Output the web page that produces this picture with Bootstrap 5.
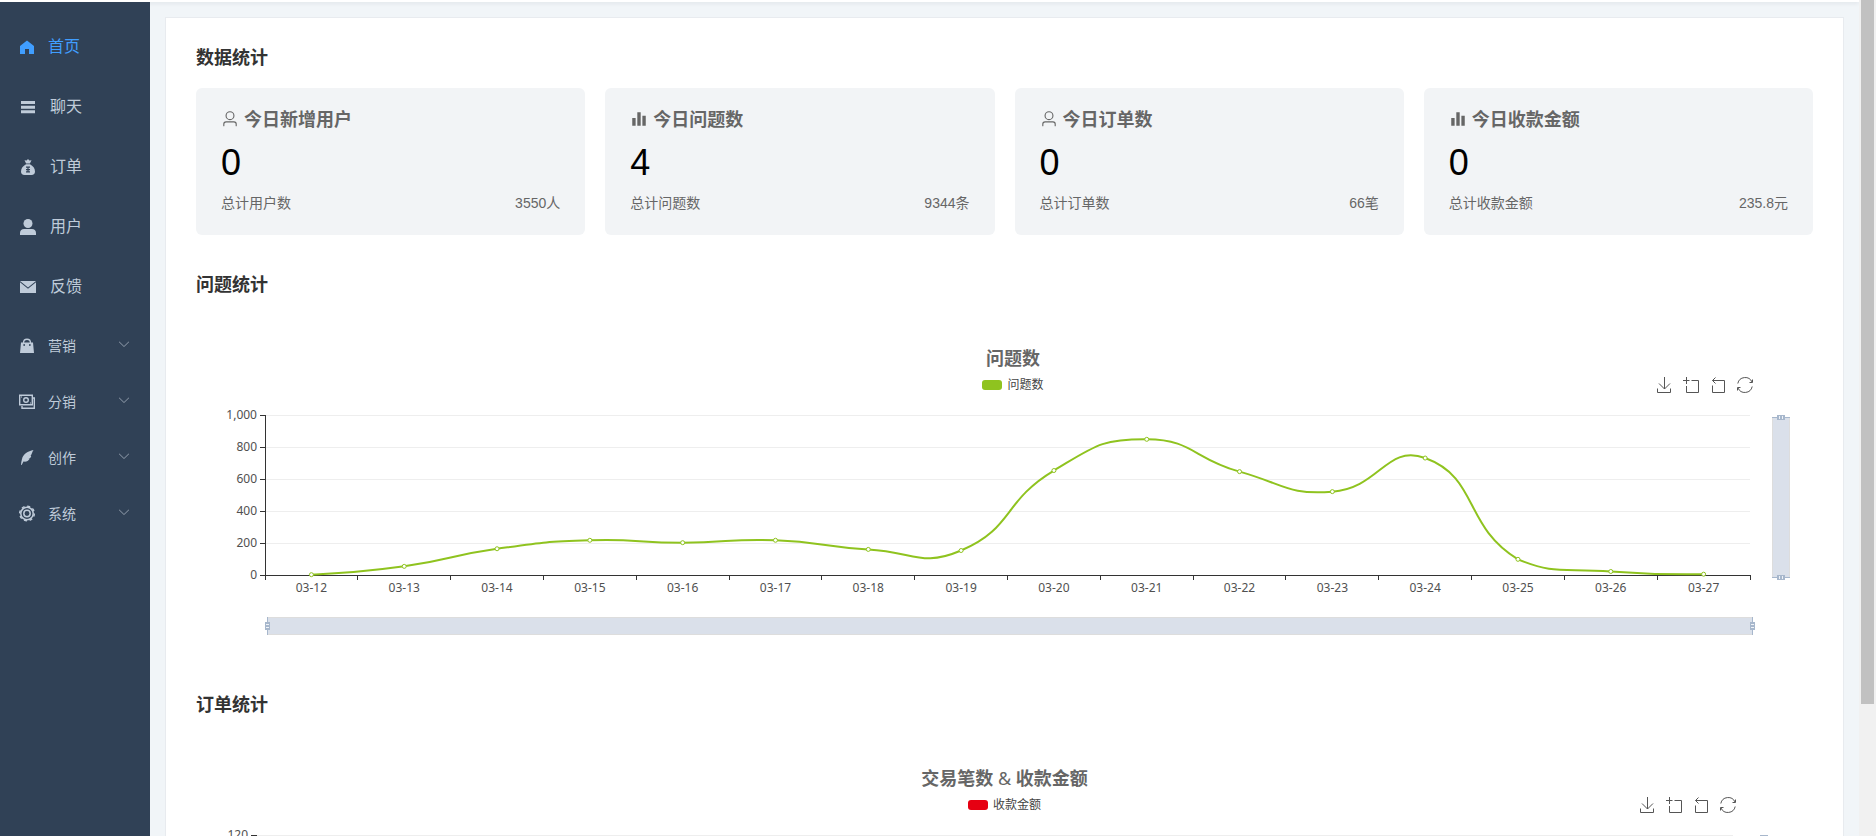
<!DOCTYPE html>
<html lang="zh-CN">
<head>
<meta charset="utf-8">
<meta name="viewport" content="width=device-width, initial-scale=1">
<title>首页</title>
<link href="https://cdn.jsdelivr.net/npm/bootstrap@5.3.0/dist/css/bootstrap.min.css" rel="stylesheet">
<style>
  body { font-family: "Liberation Sans", "Noto Sans CJK SC", sans-serif; background: #f1f5f8; color: #333; }
  .topbar { height: 2px; background: #fff; box-shadow: 0 1px 4px rgba(0, 21, 41, .12); }
  .sidebar { width: 150px; background: #304156; padding-top: 15px; z-index: 1; }
  .side-link { height: 60px; padding: 0 19px 0 18px; gap: 12px; color: #bfcbd9; font-size: 16px; line-height: 24px; border: 0; background: none; text-decoration: none; width: 100%; }
  .side-link:hover { color: #fff; }
  .side-link.active { color: #409eff; gap: 10px; }
  .side-link.sub { height: 56px; padding-top: 2px; gap: 10px; font-size: 14px; }
  .side-link svg { width: 20px; height: 20px; fill: currentColor; flex: none; }
  .side-link svg.caret { width: 14px; height: 14px; color: #8c98a7; }
  .workspace { padding: 15px 15px 0; overflow-y: auto; scrollbar-width: none; }
  .workspace::-webkit-scrollbar { display: none; }
  .panel { background: #fff; border: 1px solid #e8ebef; padding: 30px; }
  .heading { font-size: 18px; line-height: 20px; font-weight: 700; margin: 0 0 20px; }
  .stat { background: #f2f4f6; border-radius: 6px; padding: 20px 25px; color: #666; font-size: 14px; line-height: 23px; }
  .stat h3 { font-size: 18px; line-height: 24px; font-weight: 700; gap: 5px; margin: 0 0 11px; }
  .stat svg { width: 18px; height: 18px; margin-bottom: 2px; fill: currentColor; }
  .figure-num { font-size: 36px; line-height: 40px; color: #000; margin-bottom: 9px; }
  .stats { display: grid; grid-template-columns: repeat(4, 1fr); gap: 20px; margin-bottom: 40px; }
  .chart { font-family: "Noto Sans", "Noto Sans CJK SC", sans-serif; padding-top: 33px; margin-bottom: 55px; }
  .chart.wide { margin-right: -17px; }
  .chart h3 { font-size: 18px; line-height: 20px; font-weight: 700; color: #666; margin: 0 0 6px; }
  .chart h3 span { font-weight: 400; }
  .chart-bar { display: grid; grid-template-columns: 1fr auto 1fr; height: 22px; align-items: center; margin-bottom: 4px; }
  .legend-item { font-size: 12px; line-height: 18px; gap: 5px; color: #444; }
  .swatch { width: 20px; height: 10px; border-radius: 3px; }
  .swatch.green { background: #8fc31f; }
  .swatch.red { background: #e60012; }
  .tools { gap: 11px; padding-right: 77px; }
  .tools button { border: 0; padding: 0; background: none; width: 16px; height: 16px; display: flex; }
  .tools svg { width: 16px; height: 16px; overflow: visible; fill: none; stroke: #555; }
  .plot { display: block; width: 100%; height: 240px; font-size: 12px; }
  .plot text { fill: #505050; }
  .track { width: 17px; background: #f1f1f1; padding: 0 2px; }
  .thumb { height: 84.2%; background: #c1c1c1; }
</style>
</head>
<body class="vh-100 overflow-hidden d-flex">
<svg class="d-none">
  <symbol id="i-user" viewBox="0 0 1024 1024"><path d="M512 512a192 192 0 1 0 0-384 192 192 0 0 0 0 384m0 64a256 256 0 1 1 0-512 256 256 0 0 1 0 512m320 320v-96a96 96 0 0 0-96-96H288a96 96 0 0 0-96 96v96a32 32 0 1 1-64 0v-96a160 160 0 0 1 160-160h448a160 160 0 0 1 160 160v96a32 32 0 1 1-64 0"/></symbol>
  <symbol id="i-bars" viewBox="0 0 1024 1024"><path d="M416 896V128h192v768zm-288 0V448h192v448zm576 0V320h192v576z"/></symbol>
  <symbol id="i-caret" viewBox="0 0 1024 1024"><path d="M831.872 340.864 512 652.672 192.128 340.864a30.592 30.592 0 0 0-42.752 0 29.12 29.12 0 0 0 0 41.6L489.664 714.24a32 32 0 0 0 44.672 0l340.288-331.712a29.12 29.12 0 0 0 0-41.728 30.592 30.592 0 0 0-42.752 0z"/></symbol>
  <symbol id="t-save" viewBox="0 0 16 16"><path d="M8.500 0v12M3 6.500l5.500 5.500 5.500-5.500M1.500 11.500v4h13v-4"/></symbol>
  <symbol id="t-zoom" viewBox="0 0 16 16"><path d="M3.500 0v7M0 3.500h6.500M8.500 3.500h7v12H3.500V9"/></symbol>
  <symbol id="t-back" viewBox="0 0 16 16"><path d="M5.500 .500l-3 3 3 3M2.500 3.500h12v12H2.500V8.500"/></symbol>
  <symbol id="t-reset" viewBox="0 0 16 16"><path d="M.800 6.500A7.500 7.500 0 0 1 15 5M15.500 2.500V5.500h-3M15.200 9.500A7.500 7.500 0 0 1 1 11M.500 13.500v-3h3"/></symbol>
</svg>

<div class="d-flex flex-column flex-grow-1 overflow-hidden">
  <header class="topbar flex-shrink-0"></header>
  <div class="d-flex flex-grow-1 overflow-hidden">
    <nav class="sidebar flex-shrink-0" aria-label="主菜单">
      <a href="#" class="side-link active d-flex align-items-center"><svg viewBox="0 0 20 20"><path d="M9 3.500 2 9v8h5v-5h4v5h5V9z"/></svg>首页</a>
      <a href="#" class="side-link d-flex align-items-center"><svg viewBox="0 0 20 20"><path d="M3 4h14v3H3zM3 8.700h14v3H3zM3 13.300h14v3H3z"/></svg>聊天</a>
      <a href="#" class="side-link d-flex align-items-center"><svg viewBox="0 0 20 20"><path fill-rule="evenodd" d="M6.500 3.200 8.600 3.500 10 2l1.400 1.500 2.100-.3-1.600 3.300H8.100zM8 7.200h4c3 1.600 5 4.300 5 7.300 0 2.300-1.200 3.500-3.500 3.500h-7C4.200 18 3 16.800 3 14.500c0-3 2-5.700 5-7.300zM8 9.500v1.300h1.400V12H8v1.200h1.400v1H8v1.200h4v-1.200h-1.400v-1H12V12h-1.400v-1.200H12V9.500z"/></svg>订单</a>
      <a href="#" class="side-link d-flex align-items-center"><svg viewBox="0 0 20 20"><circle cx="10" cy="6.500" r="4.500"/><path d="M2 18v-2c0-2.500 1.800-4 4-4h8c2.200 0 4 1.500 4 4v2z"/></svg>用户</a>
      <a href="#" class="side-link d-flex align-items-center"><svg viewBox="0 0 20 20"><path d="M2 4h16L10 10.500zM2 5.300l8 6.500 8-6.500V16H2z"/></svg>反馈</a>
      <button type="button" class="side-link sub d-flex align-items-center"><svg viewBox="0 0 20 20"><path fill-rule="evenodd" d="M3 6.500h12L16 17H2zM5.500 8v2h1.300V8zm5.700 0v2h1.300V8z"/><path d="M5.500 7c0-5 7-5 7 0" fill="none" stroke="currentColor" stroke-width="1.300"/></svg>营销<svg class="caret ms-auto mb-1"><use href="#i-caret"/></svg></button>
      <button type="button" class="side-link sub d-flex align-items-center"><svg viewBox="0 0 20 20"><g fill="none" stroke="currentColor" stroke-width="1.400"><path d="M1.700 3.200h12.600v9.600H1.700zM4 14v2.300h12.300V6H15"/><circle cx="8" cy="8" r="2.300"/></g><path d="M3 4.500h1v1H3zM12 10.500h1v1h-1z"/></svg>分销<svg class="caret ms-auto mb-1"><use href="#i-caret"/></svg></button>
      <button type="button" class="side-link sub d-flex align-items-center"><svg viewBox="0 0 20 20"><path d="M15.500 2C10 3 5 6 4 11c-.5 2-1 4-1 6l.8-.2 1.700-3.300C8 14 10.500 13 11.500 11l-1-.2c1.500-.3 2.500-1.500 2.700-2.800L12.500 7.800c1.500-1.500 1.500-4 3-5.800z"/></svg>创作<svg class="caret ms-auto mb-1"><use href="#i-caret"/></svg></button>
      <button type="button" class="side-link sub d-flex align-items-center"><svg viewBox="0 0 20 20"><g fill="none" stroke="currentColor"><circle cx="9" cy="9.500" r="6.200" stroke-width="1.500"/><circle cx="9" cy="9.500" r="7.300" stroke-width="1.500" stroke-dasharray="3 2.733"/><circle cx="9" cy="9.500" r="3.200" stroke-width="1.500"/></g></svg>系统<svg class="caret ms-auto mb-1"><use href="#i-caret"/></svg></button>
    </nav>

    <main class="workspace flex-grow-1">
      <div class="panel">
        <h2 class="heading">数据统计</h2>
        <div class="stats">
          <div class="stat">
            <h3 class="d-flex align-items-center"><svg><use href="#i-user"/></svg>今日新增用户</h3>
            <div class="figure-num">0</div>
            <div class="d-flex justify-content-between"><span>总计用户数</span><span>3550人</span></div>
          </div>
          <div class="stat">
            <h3 class="d-flex align-items-center"><svg><use href="#i-bars"/></svg>今日问题数</h3>
            <div class="figure-num">4</div>
            <div class="d-flex justify-content-between"><span>总计问题数</span><span>9344条</span></div>
          </div>
          <div class="stat">
            <h3 class="d-flex align-items-center"><svg><use href="#i-user"/></svg>今日订单数</h3>
            <div class="figure-num">0</div>
            <div class="d-flex justify-content-between"><span>总计订单数</span><span>66笔</span></div>
          </div>
          <div class="stat">
            <h3 class="d-flex align-items-center"><svg><use href="#i-bars"/></svg>今日收款金额</h3>
            <div class="figure-num">0</div>
            <div class="d-flex justify-content-between"><span>总计收款金额</span><span>235.8元</span></div>
          </div>
        </div>

        <h2 class="heading">问题统计</h2>
        <section class="chart wide">
          <h3 class="text-center">问题数</h3>
          <div class="chart-bar">
            <span></span>
            <div class="legend-item d-flex align-items-center"><span class="swatch green"></span>问题数</div>
            <div class="tools d-flex justify-content-end">
              <button type="button" aria-label="保存为图片"><svg><use href="#t-save"/></svg></button>
              <button type="button" aria-label="区域缩放"><svg><use href="#t-zoom"/></svg></button>
              <button type="button" aria-label="缩放还原"><svg><use href="#t-back"/></svg></button>
              <button type="button" aria-label="还原"><svg><use href="#t-reset"/></svg></button>
            </div>
          </div>
          <svg class="plot" id="plot-questions"></svg>
        </section>

        <h2 class="heading">订单统计</h2>
        <section class="chart">
          <h3 class="text-center">交易笔数 <span>&amp;</span> 收款金额</h3>
          <div class="chart-bar">
            <span></span>
            <div class="legend-item d-flex align-items-center"><span class="swatch red"></span>收款金额</div>
            <div class="tools d-flex justify-content-end">
              <button type="button" aria-label="保存为图片"><svg><use href="#t-save"/></svg></button>
              <button type="button" aria-label="区域缩放"><svg><use href="#t-zoom"/></svg></button>
              <button type="button" aria-label="缩放还原"><svg><use href="#t-back"/></svg></button>
              <button type="button" aria-label="还原"><svg><use href="#t-reset"/></svg></button>
            </div>
          </div>
          <svg class="plot" id="plot-orders"></svg>
        </section>
      </div>
    </main>
  </div>
</div>
<div class="track flex-shrink-0" aria-hidden="true"><div class="thumb"></div></div>

<script src="https://cdn.jsdelivr.net/npm/bootstrap@5.3.0/dist/js/bootstrap.bundle.min.js"></script>
<script>
  const days = Array.from({ length: 16 }, (_, i) => '03-' + (12 + i));
  const TOP = 15, BOTTOM = 175;

  // Bezier path whose control points follow the chord between the neighbours.
  function smoothPath(p) {
    const dist = (a, b) => Math.hypot(a[0] - b[0], a[1] - b[1]);
    let d = 'M' + p[0], out = p[0];
    for (let i = 1; i < p.length; i++) {
      let before = p[i], after = p[i];
      if (i < p.length - 1) {
        const a = dist(p[i], p[i - 1]), b = dist(p[i], p[i + 1]), r = b / (a + b);
        const v = [p[i + 1][0] - p[i - 1][0], p[i + 1][1] - p[i - 1][1]];
        before = [p[i][0] - v[0] * .5 * (1 - r), Math.min(BOTTOM, p[i][1] - v[1] * .5 * (1 - r))];
        after = [p[i][0] + v[0] * .5 * r, Math.min(BOTTOM, p[i][1] + v[1] * .5 * r)];
      }
      d += 'C' + out + ' ' + before + ' ' + p[i];
      out = after;
    }
    return d;
  }

  function draw(id, left, max, step, values) {
    const svg = document.getElementById(id);
    const w = svg.clientWidth, right = w - 80, band = (right - left) / days.length;
    let s = '';
    for (let v = 0; v <= max; v += step) {
      const y = Math.round(BOTTOM - v / max * (BOTTOM - TOP)) + .5;
      if (v) s += `<path d="M${left} ${y}H${right}" stroke="#eee"/>`;
      s += `<path d="M${left - 5} ${y}h5" stroke="#333"/>`;
      s += `<text x="${left - 8}" y="${y + 3}" text-anchor="end">${v.toLocaleString('en-US')}</text>`;
    }
    s += `<path d="M${left + .5} ${TOP}V${BOTTOM + .5}H${right + .5}" fill="none" stroke="#333"/>`;
    for (let i = 0; i <= days.length; i++) {
      s += `<path d="M${Math.floor(left + i * band) + .5} ${BOTTOM}v5" stroke="#333"/>`;
      if (i < days.length) s += `<text x="${left + (i + .5) * band}" y="${BOTTOM + 17}" text-anchor="middle">${days[i]}</text>`;
    }
    if (values) {
      const pts = values.map((v, i) => [left + (i + .5) * band, BOTTOM - v / max * (BOTTOM - TOP)]);
      s += `<path d="${smoothPath(pts)}" fill="none" stroke="#8fc31f" stroke-width="2"/>`;
      pts.forEach(p => s += `<circle cx="${p[0]}" cy="${p[1]}" r="2" fill="#fff" stroke="#8fc31f"/>`);
    }
    // range sliders: one under the plot, one at its right
    const hx = left + 2, hw = right - left, vx = w - 58;
    s += `<rect x="${hx + .5}" y="217.500" width="${hw}" height="17" fill="#dae0ea" stroke="#ddd"/>`;
    for (const x of [hx, hx + hw])
      s += `<path d="M${x + .5} 217v18" stroke="#a7b7cc"/><rect x="${x - 2}" y="222" width="5" height="8" fill="#a7b7cc"/><path d="M${x - 1} 224.500h3M${x - 1} 227.500h3" stroke="#eef2f7"/>`;
    s += `<rect x="${vx + .5}" y="17.500" width="17" height="160" fill="#dae0ea" stroke="#ddd"/>`;
    for (const y of [17, 177])
      s += `<path d="M${vx} ${y + .5}h18" stroke="#a7b7cc"/><rect x="${vx + 5}" y="${y - 2}" width="8" height="5" fill="#a7b7cc"/><path d="M${vx + 7.5} ${y - 1}v3M${vx + 10.5} ${y - 1}v3" stroke="#eef2f7"/>`;
    svg.innerHTML = s;
  }

  function drawAll() {
    draw('plot-questions', 69, 1000, 200, [2, 54, 164, 217, 202, 217, 160, 153, 653, 848, 646, 521, 731, 98, 22, 5]);
    draw('plot-orders', 60, 120, 20);
  }
  addEventListener('resize', drawAll);
  drawAll();
</script>
</body>
</html>
